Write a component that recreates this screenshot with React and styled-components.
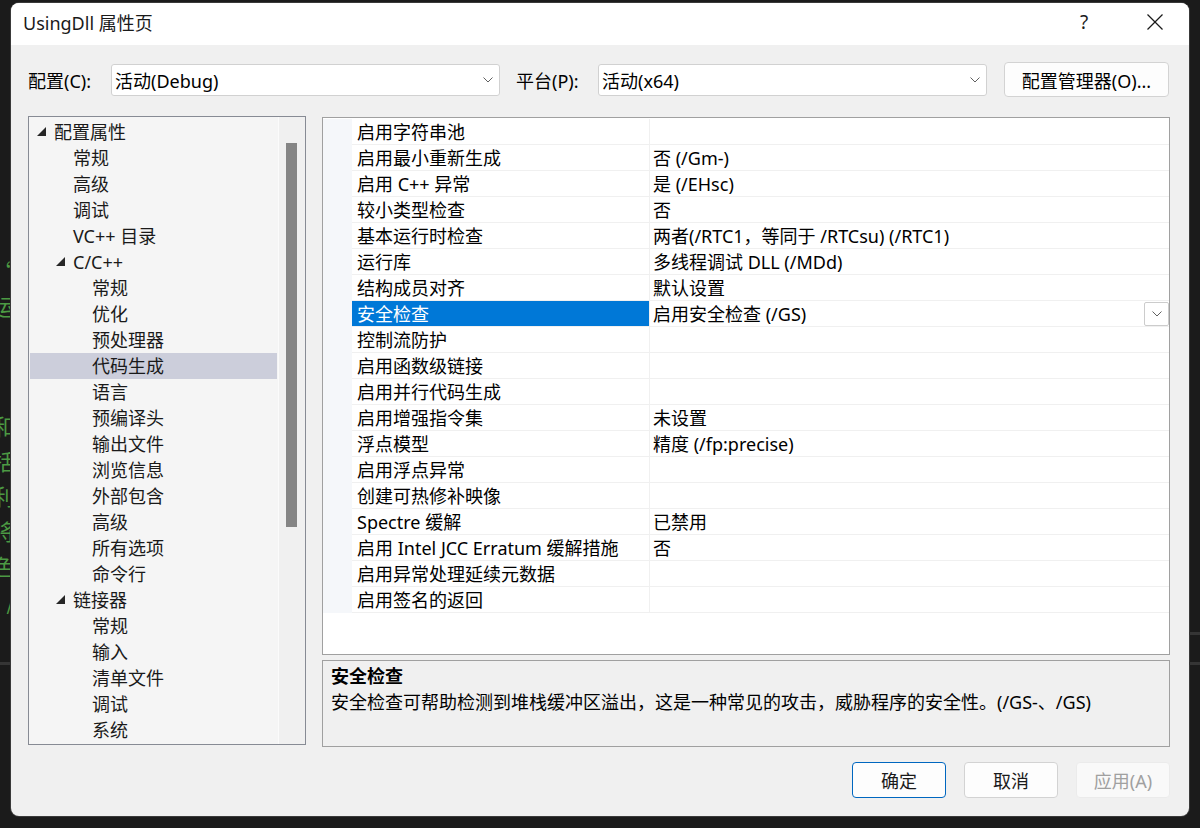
import React from 'react';
import styled, { createGlobalStyle } from 'styled-components';

const GlobalStyle = createGlobalStyle`
    html, body {
        margin: 0;
        padding: 0;
        background: #1b1b1b;
    }
    * {
        box-sizing: border-box;
    }
`;

const FONT = `"Noto Sans", "Noto Sans CJK SC", sans-serif`;

const treeItems = [
    { label: '配置属性', level: 0, expanded: true },
    { label: '常规', level: 1 },
    { label: '高级', level: 1 },
    { label: '调试', level: 1 },
    { label: 'VC++ 目录', level: 1 },
    { label: 'C/C++', level: 1, expanded: true },
    { label: '常规', level: 2 },
    { label: '优化', level: 2 },
    { label: '预处理器', level: 2 },
    { label: '代码生成', level: 2, selected: true },
    { label: '语言', level: 2 },
    { label: '预编译头', level: 2 },
    { label: '输出文件', level: 2 },
    { label: '浏览信息', level: 2 },
    { label: '外部包含', level: 2 },
    { label: '高级', level: 2 },
    { label: '所有选项', level: 2 },
    { label: '命令行', level: 2 },
    { label: '链接器', level: 1, expanded: true },
    { label: '常规', level: 2 },
    { label: '输入', level: 2 },
    { label: '清单文件', level: 2 },
    { label: '调试', level: 2 },
    { label: '系统', level: 2 },
];

const properties = [
    ['启用字符串池', ''],
    ['启用最小重新生成', '否 (/Gm-)'],
    ['启用 C++ 异常', '是 (/EHsc)'],
    ['较小类型检查', '否'],
    ['基本运行时检查', '两者(/RTC1，等同于 /RTCsu) (/RTC1)'],
    ['运行库', '多线程调试 DLL (/MDd)'],
    ['结构成员对齐', '默认设置'],
    ['安全检查', '启用安全检查 (/GS)', true],
    ['控制流防护', ''],
    ['启用函数级链接', ''],
    ['启用并行代码生成', ''],
    ['启用增强指令集', '未设置'],
    ['浮点模型', '精度 (/fp:precise)'],
    ['启用浮点异常', ''],
    ['创建可热修补映像', ''],
    ['Spectre 缓解', '已禁用'],
    ['启用 Intel JCC Erratum 缓解措施', '否'],
    ['启用异常处理延续元数据', ''],
    ['启用签名的返回', ''],
];

const Chevron = () => (
    <svg width="10" height="6" viewBox="0 0 10 6">
        <polyline points="0.5,0.5 5,5 9.5,0.5" fill="none" stroke="#606060" strokeWidth="1" />
    </svg>
);

const Twisty = () => (
    <svg width="9" height="9" viewBox="0 0 9 9">
        <polygon points="9,0 9,9 0,9" fill="#262626" />
    </svg>
);

const CloseIcon = () => (
    <svg width="16" height="16" viewBox="0 0 16 16">
        <line x1="0.5" y1="0.5" x2="15.5" y2="15.5" stroke="#1a1a1a" strokeWidth="1.2" />
        <line x1="15.5" y1="0.5" x2="0.5" y2="15.5" stroke="#1a1a1a" strokeWidth="1.2" />
    </svg>
);

const App = () => {
    return (
        <>
            <GlobalStyle />
            <Desktop>
                <EdgeStrip side="left">
                    <TermLine top={250}>“</TermLine>
                    <TermLine>运</TermLine>
                    <TermLine top={85}>和</TermLine>
                    <TermLine>括</TermLine>
                    <TermLine>利</TermLine>
                    <TermLine>将</TermLine>
                    <TermLine>色</TermLine>
                    <TermLine>/</TermLine>
                    <EdgeRule top={44} />
                </EdgeStrip>
                <Dialog>
                    <TitleBar>
                        <Title>UsingDll 属性页</Title>
                        <HelpButton>?</HelpButton>
                        <CloseButton><CloseIcon /></CloseButton>
                    </TitleBar>
                    <Body>
                        <ConfigRow>
                            <FieldLabel width={83}>配置(C):</FieldLabel>
                            <Select>
                                <span>活动(Debug)</span>
                                <Chevron />
                            </Select>
                            <FieldLabel width={82} gapLeft={16}>平台(P):</FieldLabel>
                            <Select>
                                <span>活动(x64)</span>
                                <Chevron />
                            </Select>
                            <ManagerButton>配置管理器(O)...</ManagerButton>
                        </ConfigRow>
                        <Main>
                            <Tree>
                                <TreeList>
                                    {treeItems.map((item, i) => (
                                        <TreeRow key={i} level={item.level} selected={item.selected}>
                                            <TwistySlot>{item.expanded && <Twisty />}</TwistySlot>
                                            {item.label}
                                        </TreeRow>
                                    ))}
                                </TreeList>
                                <ScrollTrack>
                                    <ScrollThumb />
                                </ScrollTrack>
                            </Tree>
                            <RightColumn>
                                <Grid>
                                    {properties.map(([name, value, selected], i) => (
                                        <GridRow key={i}>
                                            <Gutter />
                                            <NameCell selected={selected}>{name}</NameCell>
                                            <ValueCell>
                                                <ValueText>{value}</ValueText>
                                                {selected && (
                                                    <DropButton>
                                                        <Chevron />
                                                    </DropButton>
                                                )}
                                            </ValueCell>
                                        </GridRow>
                                    ))}
                                </Grid>
                                <Description>
                                    <DescTitle>安全检查</DescTitle>
                                    <DescText>
                                        安全检查可帮助检测到堆栈缓冲区溢出，这是一种常见的攻击，威胁程序的安全性。(/GS-、/GS)
                                    </DescText>
                                </Description>
                            </RightColumn>
                        </Main>
                        <Footer>
                            <DialogButton primary>确定</DialogButton>
                            <DialogButton>取消</DialogButton>
                            <DialogButton disabled>应用(A)</DialogButton>
                        </Footer>
                    </Body>
                </Dialog>
                <EdgeStrip side="right">
                    <EdgeRule top={629} />
                    <EdgeRule top={27} />
                </EdgeStrip>
            </Desktop>
        </>
    );
};

const Desktop = styled.div`
    display: flex;
    align-items: flex-start;
    width: 1200px;
    height: 828px;
    padding-top: 3px;
    background: #1b1b1b;
    overflow: hidden;
    font-family: ${FONT};
`;

const EdgeStrip = styled.div`
    width: 11px;
    flex: none;
    height: 825px;
    display: flex;
    flex-direction: column;
    align-items: ${(p) => (p.side === 'left' ? 'flex-end' : 'stretch')};
    overflow: hidden;
`;

const TermLine = styled.div`
    margin-top: ${(p) => p.top || 0}px;
    height: 35px;
    line-height: 35px;
    font-size: 22px;
    color: #4c9a43;
    font-family: "Noto Sans CJK SC", sans-serif;
    white-space: nowrap;
    overflow: hidden;
    flex: none;
    margin-right: -4px;
`;

const EdgeRule = styled.div`
    margin-top: ${(p) => p.top}px;
    height: 3px;
    width: 100%;
    flex: none;
    background: #353535;
`;

const Dialog = styled.div`
    width: 1178px;
    height: 813px;
    flex: none;
    display: flex;
    flex-direction: column;
    background: #f0f0f0;
    border-radius: 8px;
    overflow: hidden;
    box-shadow: 0 0 0 1px #3a3a3a;
    color: #000;
    font-size: 18px;
`;

const TitleBar = styled.div`
    height: 42px;
    flex: none;
    display: flex;
    align-items: center;
    background: #ffffff;
    padding: 0 0 4px 12px;
`;

const Title = styled.div`
    flex: 1;
    font-size: 18px;
    color: #1a1a1a;
`;

const HelpButton = styled.div`
    width: 74px;
    display: flex;
    align-items: center;
    justify-content: center;
    font-size: 19px;
    color: #1a1a1a;
`;

const CloseButton = styled.div`
    width: 68px;
    display: flex;
    align-items: center;
    justify-content: center;
`;

const Body = styled.div`
    flex: 1;
    display: flex;
    flex-direction: column;
    padding: 17px 19px 18px 17px;
`;

const ConfigRow = styled.div`
    display: flex;
    align-items: center;
    height: 35px;
`;

const FieldLabel = styled.div`
    width: ${(p) => p.width}px;
    margin-left: ${(p) => p.gapLeft || 0}px;
    flex: none;
`;

const Select = styled.div`
    width: 389px;
    height: 32px;
    flex: none;
    display: flex;
    align-items: center;
    justify-content: space-between;
    padding: 0 6px 0 3px;
    background: #ffffff;
    border: 1px solid #d1d1d1;
    border-radius: 3px;
`;

const ManagerButton = styled.div`
    margin-left: 17px;
    width: 165px;
    height: 35px;
    display: flex;
    align-items: center;
    justify-content: center;
    background: #fdfdfd;
    border: 1px solid #d3d3d3;
    border-radius: 4px;
`;

const Main = styled.div`
    display: flex;
    gap: 16px;
    margin-top: 19px;
`;

const Tree = styled.div`
    width: 278px;
    height: 629px;
    flex: none;
    display: flex;
    background: #f5f5f5;
    border: 1px solid #878b94;
`;

const TreeList = styled.div`
    flex: 1;
    padding: 2px 1px 0;
    border-right: 1px solid #fbfbfb;
    overflow: hidden;
`;

const TreeRow = styled.div`
    height: 26px;
    line-height: 26px;
    display: flex;
    align-items: center;
    padding-left: ${(p) => 7 + p.level * 19}px;
    background: ${(p) => (p.selected ? '#cccedb' : 'transparent')};
    color: #1a1a1a;
    white-space: nowrap;
`;

const TwistySlot = styled.span`
    width: 17px;
    flex: none;
    display: flex;
    align-items: center;
    margin-top: -1px;
`;

const ScrollTrack = styled.div`
    width: 26px;
    flex: none;
    background: #f0f0f0;
    padding: 26px 8px 0 7px;
`;

const ScrollThumb = styled.div`
    height: 384px;
    background: #858585;
`;

const RightColumn = styled.div`
    flex: 1;
    display: flex;
    flex-direction: column;
    gap: 5px;
    padding-top: 1px;
`;

const Grid = styled.div`
    height: 538px;
    background: #ffffff;
    border: 1px solid #a0a0a0;
    padding-top: 1px;
    overflow: hidden;
`;

const GridRow = styled.div`
    display: flex;
    height: 26px;
`;

const Gutter = styled.div`
    width: 29px;
    flex: none;
    background: #f5f7fa;
`;

const NameCell = styled.div`
    width: 298px;
    height: 26px;
    flex: none;
    padding: 2px 0 0 5px;
    line-height: 23px;
    white-space: nowrap;
    overflow: hidden;
    border-bottom: 1px solid #f0f0f0;
    border-right: 1px solid #f0f0f0;
    background: ${(p) => (p.selected ? '#0078d7' : 'transparent')};
    color: ${(p) => (p.selected ? '#ffffff' : '#000000')};
`;

const ValueCell = styled.div`
    flex: 1;
    height: 26px;
    display: flex;
    align-items: center;
    justify-content: space-between;
    padding-left: 3px;
    white-space: nowrap;
    border-bottom: 1px solid #f0f0f0;
`;

const ValueText = styled.span`
    line-height: 23px;
    margin-top: 2px;
`;

const DropButton = styled.div`
    width: 25px;
    height: 24px;
    display: flex;
    align-items: center;
    justify-content: center;
    background: #ffffff;
    border: 1px solid #cccccc;
    border-radius: 2px;
`;

const Description = styled.div`
    height: 87px;
    background: #f0f0f0;
    border: 1px solid #a0a0a0;
    padding: 2px 8px 0;
`;

const DescTitle = styled.div`
    font-weight: bold;
    line-height: 26px;
`;

const DescText = styled.div`
    line-height: 26px;
    white-space: nowrap;
`;

const Footer = styled.div`
    display: flex;
    justify-content: flex-end;
    gap: 18px;
    margin-top: 15px;
`;

const DialogButton = styled.div`
    width: 94px;
    height: 36px;
    display: flex;
    align-items: center;
    justify-content: center;
    border-radius: 4px;
    background: ${(p) => (p.disabled ? '#f9f9f9' : '#fdfdfd')};
    border: 1px solid ${(p) => (p.primary ? '#0067c0' : p.disabled ? '#ebebeb' : '#d3d3d3')};
    color: ${(p) => (p.disabled ? '#a0a0a0' : '#1a1a1a')};
`;

export default App;
